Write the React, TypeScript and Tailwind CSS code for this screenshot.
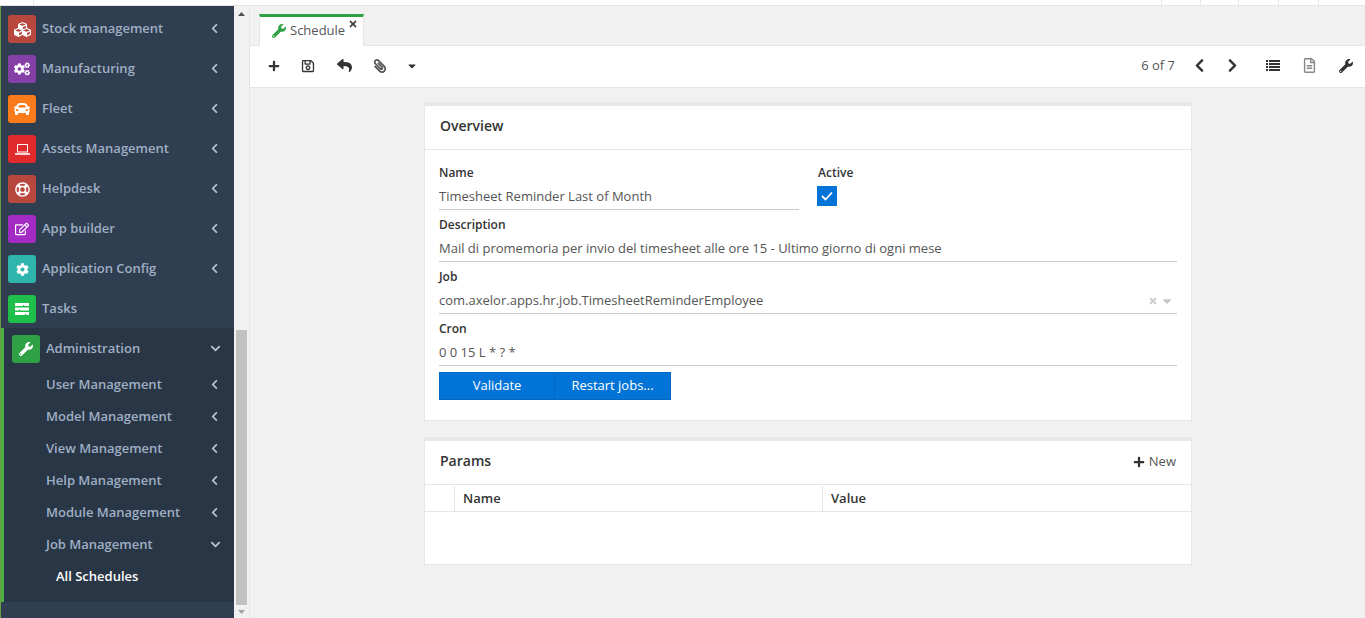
import React from 'react';
import {
  FaCubes, FaCogs, FaCar, FaRegLifeRing, FaRegEdit, FaCog, FaWrench, FaChevronLeft, FaChevronRight, FaChevronDown,
  FaPlus, FaRegSave, FaReply, FaPaperclip, FaCaretDown, FaRegFileAlt, FaTimes,
} from 'react-icons/fa';

function TasksIcon() {
  return (
    <svg width="14" height="12" viewBox="0 0 14 12" fill="white">
      <path d="M0 0h14v3H9V2H8v1H0zM0 4.500h14v3H5v-1H4v1H0zM0 9h14v3h-3v-1h-1v1H0z" />
    </svg>
  );
}

function LaptopIcon() {
  return (
    <svg width="15" height="11" viewBox="0 0 15 11" fill="none" stroke="white">
      <rect x="2.500" y="0.500" width="10" height="7.500" />
      <path d="M0 10h15" strokeWidth="1.600" />
    </svg>
  );
}

function ListIcon() {
  return (
    <svg width="14" height="11" viewBox="0 0 14 11" fill="#333">
      <path d="M0 0h2v2H0zM3 0h11v2H3zM0 3h2v2H0zM3 3h11v2H3zM0 6h2v2H0zM3 6h11v2H3zM0 9h2v2H0zM3 9h11v2H3z" />
    </svg>
  );
}

const topItems = [
  { label: 'Stock management', color: 'bg-[#b8473e]', icon: <FaCubes size={17} /> },
  { label: 'Manufacturing', color: 'bg-[#8540a8]', icon: <FaCogs size={16} /> },
  { label: 'Fleet', color: 'bg-[#f97b1c]', icon: <FaCar size={16} /> },
  { label: 'Assets Management', color: 'bg-[#e02a2c]', icon: <LaptopIcon /> },
  { label: 'Helpdesk', color: 'bg-[#b8473e]', icon: <FaRegLifeRing size={15} /> },
  { label: 'App builder', color: 'bg-[#a32bc4]', icon: <FaRegEdit size={14} /> },
  { label: 'Application Config', color: 'bg-[#2fb5ab]', icon: <FaCog size={13} /> },
];

const subItems = ['User Management', 'Model Management', 'View Management', 'Help Management', 'Module Management'];

function MenuRow({ label, color, icon, chevron = true }: { label: string; color: string; icon: React.ReactNode; chevron?: boolean }) {
  return (
    <div className="flex h-10 items-center pl-[7px] pr-[14px]">
      <div className={`flex h-7 w-7 items-center justify-center rounded-[3px] text-white ${color}`}>{icon}</div>
      <span className="ml-[6px] flex-1 text-[#9fafc4]">{label}</span>
      {chevron && <FaChevronLeft size={11} className="mb-[2px] text-[#b6c2d2]" />}
    </div>
  );
}

function Sidebar() {
  return (
    <div className="w-[234px] shrink-0 overflow-hidden border-l border-l-[#6a9c46] bg-[#2f3e50] pt-[3px] text-[13px] font-semibold">
      {topItems.map((item) => (
        <MenuRow key={item.label} {...item} />
      ))}
      <MenuRow label="Tasks" color="bg-[#20bf4b]" icon={<TasksIcon />} chevron={false} />
      <div className="-ml-px -mt-px h-[274px] border-l-4 border-l-[#4cb040] bg-[#293646] pt-px">
        <div className="flex h-10 items-center pl-2 pr-[13px]">
          <div className="flex h-7 w-7 items-center justify-center rounded-[3px] bg-[#30a045] text-white">
            <FaWrench size={14} />
          </div>
          <span className="ml-[6px] flex-1 text-[#9fafc4]">Administration</span>
          <FaChevronDown size={11} className="mb-[2px] text-[#b6c2d2]" />
        </div>
        {subItems.map((label) => (
          <div key={label} className="flex h-8 items-center pl-[42px] pr-[14px]">
            <span className="flex-1 text-[#9fafc4]">{label}</span>
            <FaChevronLeft size={11} className="mb-[2px] text-[#b6c2d2]" />
          </div>
        ))}
        <div className="flex h-8 items-center pl-[42px] pr-[13px]">
          <span className="flex-1 text-[#9fafc4]">Job Management</span>
          <FaChevronDown size={11} className="mb-[2px] text-[#b6c2d2]" />
        </div>
        <div className="flex h-8 items-center pl-[52px] text-white">All Schedules</div>
      </div>
    </div>
  );
}

function Scrollbar() {
  return (
    <div className="flex w-[15px] shrink-0 flex-col items-center bg-[#f1f1f1]">
      <svg width="7" height="4" viewBox="0 0 7 4" className="mt-[6px]" fill="#505050">
        <path d="M3.500 0L7 4H0z" />
      </svg>
      <div className="mt-[314px] h-[275px] w-[11px] bg-[#c1c1c1]" />
      <svg width="7" height="4" viewBox="0 0 7 4" className="mt-[5px]" fill="#a3a3a3">
        <path d="M0 0h7L3.500 4z" />
      </svg>
    </div>
  );
}

function Field({ label, value, trailing }: { label: string; value: string; trailing?: React.ReactNode }) {
  return (
    <div className="mb-1">
      <div className="h-5 pt-px text-[12px] font-semibold leading-5 text-[#333]">{label}</div>
      <div className="mt-[2px] flex h-[26px] items-center justify-between border-b border-[#ccc] pt-px text-[#555]">
        <span>{value}</span>
        {trailing}
      </div>
    </div>
  );
}

function Toolbar() {
  return (
    <div className="flex h-[42px] shrink-0 items-center border-b border-[#e5e5e5] bg-white pb-[2px] pl-[18px] pr-[12px] text-[#333]">
      <FaPlus size={12} />
      <FaRegSave size={14} className="ml-[21px]" />
      <FaReply size={15} className="ml-[22px]" />
      <FaPaperclip size={14} className="ml-[21px] -scale-x-100 text-[#555]" />
      <FaCaretDown size={12} className="ml-[19px]" />
      <span className="ml-auto text-[#555]">6 of 7</span>
      <FaChevronLeft size={15} className="ml-[17px]" />
      <FaChevronRight size={15} className="ml-[18px]" />
      <span className="ml-[26px]">
        <ListIcon />
      </span>
      <FaRegFileAlt size={15} className="ml-[22px] text-[#888]" />
      <FaWrench size={14} className="ml-[22px]" />
    </div>
  );
}

export default function App() {
  return (
    <div className="flex h-screen w-full flex-col overflow-hidden bg-[#f1f1f1] font-['Open_Sans',sans-serif] text-[13px]">
      <div className="flex h-[6px] shrink-0 border-b border-[#e5e5e5] bg-white">
        <div className="w-[34px] border-r border-[#e5e5e5]" />
        <div className="flex-1" />
        <div className="w-[39px] border-l border-[#e5e5e5]" />
        <div className="w-[38px] border-l border-[#e5e5e5]" />
        <div className="w-[40px] border-l border-[#e5e5e5]" />
        <div className="w-[40px] border-l border-[#e5e5e5]" />
        <div className="w-[47px] border-l border-[#e5e5e5]" />
      </div>
      <div className="flex min-h-0 flex-1">
        <Sidebar />
        <Scrollbar />
        <div className="flex min-w-0 flex-1 flex-col border-l border-[#e5e5e5]">
          <div className="flex h-[40px] shrink-0 items-end border-b border-[#e5e5e5] pl-[9px]">
            <div className="relative -mb-px flex h-[32px] w-[105px] items-center border-x border-[#e5e5e5] border-t-[3px] border-t-[#30a045] bg-white pb-[2px] pl-3 text-[#555]">
              <FaWrench size={14} className="text-[#30a045]" />
              <span className="ml-[4px]">Schedule</span>
              <FaTimes size={10} className="absolute right-[5px] top-[2px] text-[#444]" />
            </div>
          </div>
          <Toolbar />
          <div className="ml-[174px] mt-[14px] w-[768px]">
            <section className="h-[319px] border border-t-4 border-[#e8e8e8] bg-white">
              <h2 className="flex h-[44px] items-center border-b border-[#e5e5e5] pb-[5px] pl-[15px] text-[14px] font-semibold text-[#333]">Overview</h2>
              <div className="px-[14px] pt-[12px]">
                <div className="flex">
                  <div className="w-[360px]">
                    <Field label="Name" value="Timesheet Reminder Last of Month" />
                  </div>
                  <div className="ml-[18px]">
                    <div className="h-5 pl-px pt-px text-[12px] font-semibold leading-5 text-[#333]">Active</div>
                    <div className="mt-[4px] flex h-5 w-5 items-center justify-center bg-[#0274d8]">
                      <svg width="12" height="10" viewBox="0 0 12 10" fill="none" stroke="white" strokeWidth="1.800">
                        <path d="M1 5l3.500 3.500L11 1.500" />
                      </svg>
                    </div>
                  </div>
                </div>
                <Field label="Description" value="Mail di promemoria per invio del timesheet alle ore 15 - Ultimo giorno di ogni mese" />
                <Field
                  label="Job"
                  value="com.axelor.apps.hr.job.TimesheetReminderEmployee"
                  trailing={
                    <span className="mr-[3px] flex items-center gap-[2px] text-[#c8c8c8]">
                      <FaTimes size={10} />
                      <FaCaretDown size={14} />
                    </span>
                  }
                />
                <Field label="Cron" value="0 0 15 L * ? *" />
                <div className="mt-[6px] flex h-[28px] w-[232px] text-white">
                  <button className="w-[116px] border border-[#0268c2] bg-[#0274d8]">Validate</button>
                  <button className="w-[116px] border border-l-0 border-[#0268c2] bg-[#0274d8]">Restart jobs...</button>
                </div>
              </div>
            </section>
            <section className="mt-[16px] h-[128px] border border-t-4 border-[#e8e8e8] bg-white">
              <div className="flex h-[44px] items-center justify-between border-b border-[#e5e5e5] pb-[3px] pl-[15px] pr-[15px]">
                <h2 className="mb-[2px] text-[14px] font-semibold text-[#333]">Params</h2>
                <span className="mt-[2px] flex items-center gap-[4px] text-[#555]">
                  <FaPlus size={12} className="text-[#333]" />
                  New
                </span>
              </div>
              <div className="flex h-[27px] border-b border-[#e5e5e5] pt-px font-semibold text-[#333]">
                <div className="w-[29px]" />
                <div className="flex w-[368px] items-center border-l border-[#e5e5e5] pl-2">Name</div>
                <div className="flex flex-1 items-center border-l border-[#e5e5e5] pl-2">Value</div>
              </div>
            </section>
          </div>
        </div>
      </div>
    </div>
  );
}
